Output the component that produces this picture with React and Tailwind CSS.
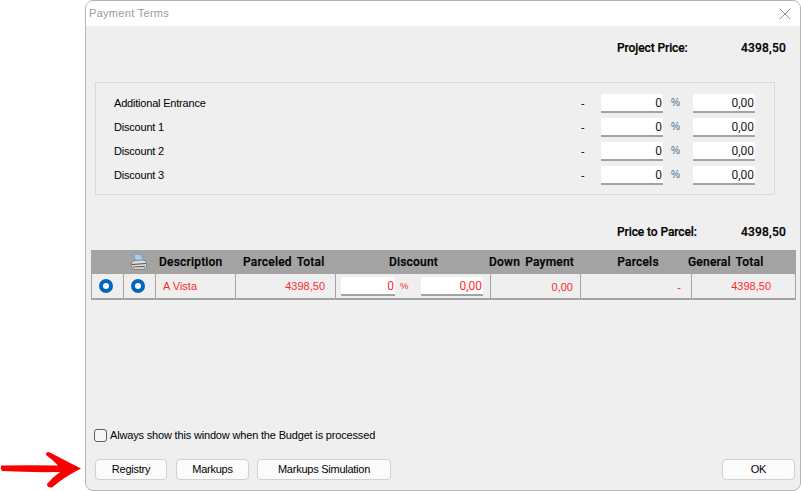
import React from "react";
import { X } from "lucide-react";

const adjustments = ["Additional Entrance", "Discount 1", "Discount 2", "Discount 3"];

const Field = ({ value, red, width = "w-[62px]" }) => (
  <div
    className={`${width} h-[19px] bg-white border-b-2 border-[#a3a3a3] flex items-center justify-end pr-[1px] pt-[1px] text-[12px] font-['Roboto',sans-serif] ${
      red ? "text-[#ff2a2a]" : "text-[#1a1a1a]"
    }`}
  >
    {value}
  </div>
);

const Radio = () => (
  <div className="w-[14px] h-[14px] rounded-full border-[4px] border-[#0067c0] bg-white" />
);

const PrinterIcon = () => (
  <svg width="16" height="16" viewBox="0 0 16 16">
    <path d="M3 0.5 L10 0.5 L12.5 7 L4.5 7 Z" fill="#a9cdf0" stroke="#7c9cbc" strokeWidth="0.7" />
    <path d="M0.5 9 Q1 7 4 6.5 L12 6 Q15 6.5 15.5 8.5 L15.5 12.5 Q14.5 15.5 11 15.5 L4 15.5 Q1 15.5 0.5 12.5 Z" fill="#dcdcdc" stroke="#666666" strokeWidth="0.7" />
    <path d="M1 10.5 L15 9.5 M2 13 L14 12.5" stroke="#505050" strokeWidth="1" />
  </svg>
);

const PriceLine = ({ label, value }) => (
  <div className="flex justify-end text-[12px] font-['Roboto',sans-serif] font-medium text-black leading-[16px] [-webkit-text-stroke:0.2px_black]">
    <span className="w-[124px] tracking-[-0.1px]">{label}</span>
    <span className="w-[44px] text-right tracking-[0.2px]">{value}</span>
  </div>
);

const Button = ({ children, width }) => (
  <button className={`${width} h-[21px] bg-[#fbfbfb] border border-[#d0d0d0] rounded-[4px] text-[11px] tracking-[-0.25px] text-black leading-none`}>
    {children}
  </button>
);

export default function App() {
  return (
    <div className="relative w-[801px] h-[491px] bg-white overflow-hidden font-['Liberation_Sans',sans-serif]">
      {/* red arrow laid over the screenshot */}
      <svg className="absolute left-0 top-[450px]" width="84" height="40" viewBox="0 0 84 40">
        <path
          d="M1 15.5 Q30 15 58 15.5 Q52 9 46 5 Q46 1 50 2.5 Q66 11 81 18.5 Q64 27 52 37.5 Q47 38 47 34 Q53 27 60 22 Q30 22.5 2 21 Q0 18.5 1 15.5 Z"
          fill="#f80000"
        />
      </svg>

      <div className="ml-[85px] w-[716px] h-[491px] flex flex-col bg-[#efefef] border border-[#b4b4b4] rounded-[8px] overflow-hidden">
        {/* title bar */}
        <div className="h-[25px] shrink-0 bg-white flex items-center justify-between pl-[3px] pr-[5px]">
          <span className="text-[11px] tracking-[0.3px] text-[#9a9a9a] -mt-[1px]">Payment Terms</span>
          <X className="w-[20px] h-[20px] text-[#8a8a8a]" strokeWidth={1.1} />
        </div>

        <div className="flex-1 flex flex-col pl-[5px] pr-[4px]">
          <div className="pt-[14px] pr-[11px]">
            <PriceLine label="Project Price:" value="4398,50" />
          </div>

          {/* adjustments */}
          <div className="mt-[26px] ml-[4px] w-[680px] h-[113px] border border-[#d9d9d9] pt-[8px] pl-[18px]">
            {adjustments.map((name) => (
              <div key={name} className="h-[24px] flex items-center text-[11px] text-black">
                <span className="w-[467px] tracking-[-0.2px]">{name}</span>
                <span className="w-[20px]">-</span>
                <Field value="0" />
                <span className="w-[30px] pl-[8px] text-[10px] text-[#4a6a80] -mt-[2px]">%</span>
                <Field value="0,00" />
              </div>
            ))}
          </div>

          <div className="mt-[29px] pr-[11px]">
            <PriceLine label="Price to Parcel:" value="4398,50" />
          </div>

          {/* parcels table */}
          <div className="mt-[10px] w-[705px] border-b-2 border-x border-[#a3a3a3]">
            <div className="grid grid-cols-[32px_32px_80px_100px_155px_90px_111px_1fr] h-[24px] items-center bg-[#a3a3a3] text-[12px] font-['Roboto',sans-serif] font-medium text-black whitespace-nowrap tracking-[0.2px] [-webkit-text-stroke:0.2px_black] [word-spacing:2px]">
              <span />
              <span className="flex justify-center pr-[2px]"><PrinterIcon /></span>
              <span className="pl-[3px]">Description</span>
              <span className="pl-[7px]">Parceled Total</span>
              <span className="text-center">Discount</span>
              <span className="-ml-[2px]">Down Payment</span>
              <span className="text-center pl-[3px]">Parcels</span>
              <span className="-ml-[4px]">General Total</span>
            </div>
            <div className="grid grid-cols-[32px_32px_80px_100px_155px_90px_111px_1fr] h-[24px] text-[11px] text-[#ff2a2a] divide-x divide-[#a3a3a3]">
              <span className="flex items-center justify-center pr-[3px]"><Radio /></span>
              <span className="flex items-center justify-center pr-[3px]"><Radio /></span>
              <span className="flex items-center pl-[7px]">A Vista</span>
              <span className="flex items-center justify-end pr-[10px]">4398,50</span>
              <span className="flex items-center pl-[5px]">
                <Field value="0" red width="w-[54px]" />
                <span className="w-[26px] pl-[5px] text-[9.5px]">%</span>
                <Field value="0,00" red />
              </span>
              <span className="flex items-center justify-end pr-[7px] pt-[2px]">0,00</span>
              <span className="flex items-center justify-end pr-[10px] pt-[2px]">-</span>
              <span className="flex items-center justify-end pr-[24px]">4398,50</span>
            </div>
          </div>

          {/* footer */}
          <label className="mt-[127px] ml-[3px] flex items-center gap-[3px] text-[11px] tracking-[-0.17px] text-black h-[16px]">
            <span className="w-[13px] h-[13px] rounded-[3px] border border-[#5f5f5f] bg-[#f6f6f6]" />
            Always show this window when the Budget is processed
          </label>
          <div className="mt-[16px] ml-[4px] w-[700px] flex items-start">
            <Button width="w-[72px] mr-[9px]">Registry</Button>
            <Button width="w-[73px] mr-[8px]">Markups</Button>
            <Button width="w-[134px] mr-auto">Markups Simulation</Button>
            <Button width="w-[73px]">OK</Button>
          </div>
        </div>
      </div>
    </div>
  );
}
